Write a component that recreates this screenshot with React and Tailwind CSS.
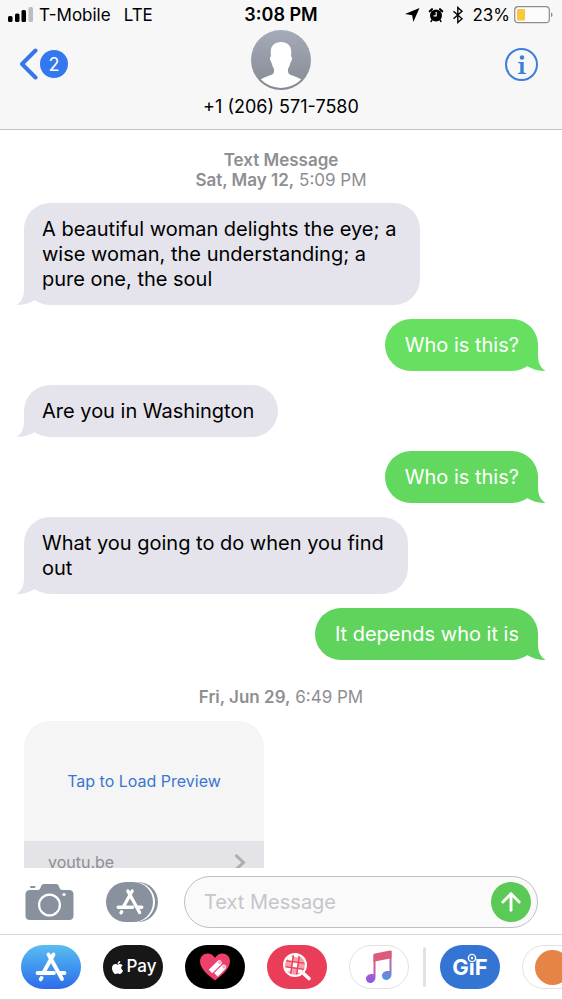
import React, { useState } from "react";
import { FaApple } from "react-icons/fa";
import { FiArrowUp } from "react-icons/fi";

const messages = [
	{
		id: 1,
		text: "A beautiful woman delights the eye; a\nwise woman, the understanding; a\npure one, the soul",
	},
	{ id: 2, mine: true, color: "bg-[#67e062] text-[#67e062]", text: "Who is this?" },
	{ id: 3, text: "Are you in Washington" },
	{ id: 4, mine: true, color: "bg-[#62d95e] text-[#62d95e]", text: "Who is this?" },
	{ id: 5, text: "What you going to do when you find\nout" },
	{ id: 6, mine: true, color: "bg-[#60d35d] text-[#60d35d]", text: "It depends who it is" },
];

// Status bar icons
const SignalIcon = () => (
	<svg width="26" height="16" viewBox="0 0 26 16" aria-hidden="true">
		<rect x="0" y="9" width="4.500" height="6" rx="1.500" />
		<rect x="7" y="6.500" width="4.500" height="8.500" rx="1.500" />
		<rect x="13.500" y="3" width="4.500" height="12" rx="1.500" />
		<rect x="20.500" y="0" width="4.500" height="15" rx="1.500" fill="#bdbdbd" />
	</svg>
);

const LocationIcon = () => (
	<svg width="16" height="16" viewBox="0 0 16 16" aria-hidden="true">
		<path d="M15.500 1 9.300 15 8.200 8.300 1 7z" />
	</svg>
);

const AlarmIcon = () => (
	<svg width="16" height="16" viewBox="0 0 16 16" aria-hidden="true">
		<circle cx="8" cy="8.500" r="6" />
		<path d="M1.800 4.300 4 2.200M14.200 4.300 12 2.200" stroke="#000" strokeWidth="2.200" strokeLinecap="round" />
		<path d="m4 13-1 1.500M12 13l1 1.500" stroke="#000" strokeWidth="1.400" strokeLinecap="round" />
		<path d="M8.200 5v3.800H5.500" fill="none" stroke="#f7f7f7" strokeWidth="1.200" />
	</svg>
);

const BluetoothIcon = () => (
	<svg width="12" height="18" viewBox="0 0 12 18" fill="none" stroke="#000" strokeWidth="1.400" aria-hidden="true">
		<path d="M1.500 5.200 10 12.800l-4.200 3.700V1.500L10 5.200 1.500 12.800" />
	</svg>
);

const BatteryIcon = () => (
	<svg width="40" height="18" viewBox="0 0 40 18" aria-hidden="true">
		<rect x="0.700" y="0.700" width="34.600" height="16" rx="3.500" fill="#fcfcfc" stroke="#8e8e8e" strokeWidth="1.200" />
		<rect x="3" y="3" width="8" height="11.500" rx="1" fill="#f8c93c" />
		<path d="M37 6.500c2 .5 2 4 0 4.500z" fill="#8e8e8e" />
	</svg>
);

const Avatar = () => (
	<svg width="60" height="60" viewBox="0 0 60 60" aria-hidden="true">
		<defs>
			<linearGradient id="avatar" x1="0" y1="0" x2="0" y2="1">
				<stop offset="0" stopColor="#a5abb9" />
				<stop offset="1" stopColor="#858992" />
			</linearGradient>
			<clipPath id="avatarClip">
				<circle cx="30" cy="30" r="28" />
			</clipPath>
		</defs>
		<circle cx="30" cy="30" r="30" fill="url(#avatar)" />
		<path
			clipPath="url(#avatarClip)"
			fill="#fff"
			d="M30 12c6.500 0 10.500 4 10.300 10.500l-.3 4c1.600.2 1.300 3.500-.3 5.700-.7 1-.8 3.800-2.300 5.800-.7 1-.6 4 .3 5.400 2 2.600 13 3.800 15.300 9V60H7v-7.600c2.300-5.200 13.300-6.400 15.300-9 .9-1.400 1-4.400.3-5.400-1.500-2-1.600-4.800-2.300-5.800-1.600-2.200-1.900-5.500-.3-5.700l-.3-4C19.500 16 23.500 12 30 12z"
		/>
	</svg>
);

// The "A" made of three sticks
const StoreMark = ({ size }) => (
	<svg width={size} height={size} viewBox="0 0 32 32" fill="none" stroke="#fff" strokeWidth="3.800" strokeLinecap="round" aria-hidden="true">
		<path d="M13.500 3.500 27 28" />
		<path d="M18.500 3.500 8.500 21.500" />
		<path d="M2.500 22H19M25 22h4.500" />
		<path d="m6.500 27-.8 1.400" />
	</svg>
);

const CameraIcon = () => (
	<svg width="50" height="38" viewBox="0 0 50 38" aria-hidden="true">
		<path
			fill="#8a919e"
			d="M5 7h8c1.500 0 2-1 2.600-2.500C16.300 2.300 17 1 19 1h12c2 0 2.700 1.300 3.400 3.500C35 6 35.500 7 37 7h7c3 0 4.500 1.500 4.500 4.500v21c0 3-1.500 4.500-4.500 4.500H5c-3 0-4.500-1.500-4.500-4.500v-21C.5 8.500 2 7 5 7z"
		/>
		<rect x="5" y="3" width="5.500" height="2" rx="1" fill="#8a919e" />
		<circle cx="24.500" cy="22" r="10.400" fill="none" stroke="#fff" strokeWidth="2.200" />
		<circle cx="39" cy="11.500" r="1.600" fill="#fff" />
	</svg>
);

const HeartIcon = () => (
	<svg width="32" height="30" viewBox="0 0 32 30" aria-hidden="true">
		<path fill="#ee3f6d" d="M16 28.500C12 25 1 18 1 9.500 1 4.500 4.500 1.500 8.500 1.500c3.500 0 6 2 7.500 4.500 1.500-2.500 4-4.500 7.500-4.500 4 0 7.500 3 7.500 8C31 18 20 25 16 28.500z" />
		<g transform="rotate(45 20 16)">
			<path fill="#fff" d="M15 11a2.500 2.500 0 0 1 5 0v12.500h-5zM21.200 11a2.500 2.500 0 0 1 5 0v11h-5z" transform="translate(-1 1)" />
			<path fill="#f9a9bf" d="M15 11.500a1.500 1.500 0 0 1 3 0v1.500h-3zM21.200 11.500a1.500 1.500 0 0 1 3 0v1.500h-3z" />
		</g>
	</svg>
);

const ImageSearchIcon = () => (
	<svg width="30" height="30" viewBox="0 0 30 30" fill="none" aria-hidden="true">
		<circle cx="13" cy="13" r="10.500" fill="#f7a0ae" />
		<g transform="rotate(8 13 13)">
			<path fill="#fff" d="M10.500 10.500h5v5h-5zM5 5h4.500v4.500H5zM16.500 16.500H21V20h-4.500zM10.500 3h5v2h-5zM4 16.500h5.500V20H5z" />
			<path d="M10 3v20M16 3v20M3 10h20M3 16h20" stroke="#ea3d57" strokeWidth="1.400" />
		</g>
		<circle cx="13" cy="13" r="11" stroke="#fff" strokeWidth="2" />
		<path d="m21.500 21.500 5.500 5" stroke="#fff" strokeWidth="3.600" strokeLinecap="round" />
	</svg>
);

const MusicIcon = () => (
	<svg width="28" height="34" viewBox="0 0 28 34" aria-hidden="true">
		<defs>
			<linearGradient id="noteLeft" x1="0" y1="0" x2="0" y2="1">
				<stop offset="0.150" stopColor="#ea5673" />
				<stop offset="0.650" stopColor="#b45fc0" />
				<stop offset="1" stopColor="#7d5af0" />
			</linearGradient>
			<linearGradient id="noteRight" x1="0" y1="0" x2="0" y2="1">
				<stop offset="0.150" stopColor="#d4608c" />
				<stop offset="0.650" stopColor="#8a78c8" />
				<stop offset="1" stopColor="#4a98e8" />
			</linearGradient>
		</defs>
		<path fill="url(#noteLeft)" d="M8.500 4.500v19.700C3.500 23.500 1 26 1 28.800 1 31 2.700 33 5 33c3.200 0 5.500-2.500 5.500-6V4z" />
		<path fill="url(#noteRight)" d="M24.500 1v20.200c-5-.7-7.500 1.800-7.500 4.600 0 2.200 1.700 4.200 4 4.200 3.200 0 5.500-2.500 5.500-6V1z" />
		<path fill="#dd5a7d" d="M8.500 5.500c0-1.300.5-1.800 1.500-2L25 .6c1-.2 1.500.2 1.500 1.200v6.500l-18 3.500z" />
	</svg>
);

const Tail = ({ mine }) => (
	<svg
		className={mine ? "absolute bottom-0 -right-2 -scale-x-100" : "absolute bottom-0 -left-2"}
		width="26"
		height="30"
		viewBox="0 0 26 30"
		fill="currentColor"
		aria-hidden="true"
	>
		<path d="M8 2V14C8 21 6 26.500 0.500 30 8 30 14 28 19 25L26 2z" />
	</svg>
);

const Bubble = ({ message }) => (
	<li
		className={
			message.mine
				? `relative self-end rounded-[26px] pt-[14px] pr-[19px] pb-[13px] pl-5 ${message.color}`
				: "relative self-start rounded-[26px] bg-[#e5e4ec] pt-[14px] pr-6 pb-[13px] pl-[18px] text-[#e5e4ec]"
		}
	>
		<Tail mine={message.mine} />
		<p className={message.mine ? "relative text-white" : "relative whitespace-pre-line text-black"}>
			{message.text}
		</p>
	</li>
);

const AppButton = ({ label, className, children }) => (
	<button
		type="button"
		aria-label={label}
		className={`flex h-11 w-[60px] shrink-0 items-center justify-center rounded-full ${className}`}
	>
		{children}
	</button>
);

const Header = () => (
	<header className="shrink-0 border-b border-[#c4c4c6] bg-[#f7f7f7] pb-3">
		<div className="grid h-[30px] grid-cols-[1fr_auto_1fr] items-center px-2 text-[17px] leading-5">
			<div className="flex items-center gap-[5px]">
				<SignalIcon />
				<span>T-Mobile</span>
				<span className="ml-2">LTE</span>
			</div>
			<span className="text-[18px] font-semibold">3:08 PM</span>
			<div className="flex items-center justify-end gap-2">
				<LocationIcon />
				<AlarmIcon />
				<BluetoothIcon />
				<span className="flex items-center gap-1">
					23%
					<BatteryIcon />
				</span>
			</div>
		</div>
		<div className="grid grid-cols-[1fr_auto_1fr] items-start px-[19px]">
			<button type="button" aria-label="Back, 2 unread" className="mt-[18px] flex items-center gap-[2px] justify-self-start">
				<svg width="19" height="32" viewBox="0 0 19 32" fill="none" stroke="#3577e5" strokeWidth="4" strokeLinecap="round" strokeLinejoin="round" aria-hidden="true">
					<path d="M16.500 2.500 3 16l13.500 13.500" />
				</svg>
				<span className="flex size-7 items-center justify-center rounded-full bg-[#3478f0] text-[18px] text-white">
					2
				</span>
			</button>
			<div className="flex flex-col items-center gap-[6px]">
				<Avatar />
				<h1 className="text-[18px] leading-[21px]">+1 (206) 571-7580</h1>
			</div>
			<button
				type="button"
				aria-label="Details"
				className="mt-[18px] mr-[5px] flex size-[33px] items-center justify-center justify-self-end rounded-full border-2 border-[#3c7ddd] text-[#3c7ddd]"
			>
				<svg width="10" height="20" viewBox="0 0 10 20" fill="currentColor" aria-hidden="true">
					<circle cx="5" cy="2.500" r="2.200" />
					<path d="M1 7h5.700v10.500l2.300.6V19H1v-.9l2.300-.6V8.500L1 8z" />
				</svg>
			</button>
		</div>
	</header>
);

const App = () => {
	const [draft, setDraft] = useState("");

	return (
		<div className="flex h-screen flex-col overflow-hidden bg-white font-['Inter',sans-serif] text-black">
			<Header />

			<main className="min-h-0 flex-1 overflow-hidden px-6 pt-5">
				<p className="text-center text-[17px] leading-5 text-[#8e8e93]">
					<span className="block font-semibold">Text Message</span>
					<span className="font-semibold">Sat, May 12,</span> 5:09 PM
				</p>
				<ul className="mt-[13px] flex flex-col gap-[14px] text-[20px] leading-[25px]">
					{messages.map((message) => (
						<Bubble key={message.id} message={message} />
					))}
				</ul>
				<p className="mt-[27px] text-center text-[17px] leading-5 text-[#8e8e93]">
					<span className="font-semibold">Fri, Jun 29,</span> 6:49 PM
				</p>
				<div className="mt-[14px] w-60 overflow-hidden rounded-[26px] bg-[#f5f5f6]">
					<button type="button" className="h-[120px] w-full text-[16px] text-[#3b76cf]">
						Tap to Load Preview
					</button>
					<a href="#preview" className="flex h-[62px] items-start justify-between bg-[#e4e3e8] pt-[11px] pl-6 pr-[18px] text-[16px] leading-5 text-[#8e8e93]">
						youtu.be
						<svg className="mt-[2px]" width="12" height="17" viewBox="0 0 12 17" fill="none" stroke="#adadb1" strokeWidth="3" aria-hidden="true">
							<path d="m1.500 1 8 7.500-8 7.500" />
						</svg>
					</a>
				</div>
			</main>

			<form
				className="flex shrink-0 items-center bg-white pt-2 pb-[6px] pl-[25px] pr-6"
				onSubmit={(e) => e.preventDefault()}
			>
				<button type="button" aria-label="Camera">
					<CameraIcon />
				</button>
				<button type="button" aria-label="Apps" className="relative ml-[31px] flex h-10 w-[52px]">
					<span className="absolute right-0 h-10 w-[47px] rounded-full bg-[#8a919e]" />
					<span className="absolute left-0 h-10 w-[49px] rounded-full bg-white" />
					<span className="relative flex h-10 w-[47px] items-center justify-center rounded-full bg-[#8a919e]">
						<StoreMark size={28} />
					</span>
				</button>
				<div className="ml-[26px] flex h-[52px] min-w-0 flex-1 items-center rounded-full border border-[#c0c0c4] bg-[#fafafa] pl-[19px] pr-[6px]">
					<input
						type="text"
						aria-label="Text Message"
						placeholder="Text Message"
						value={draft}
						onChange={(e) => setDraft(e.target.value)}
						className="min-w-0 flex-1 bg-transparent text-[20px] outline-none placeholder:text-[#c5c5ca]"
					/>
					<button
						type="submit"
						aria-label="Send"
						className="flex size-10 shrink-0 items-center justify-center rounded-full bg-[#5ac955] text-white"
					>
						<FiArrowUp size={28} strokeWidth={2.5} />
					</button>
				</div>
			</form>

			<nav className="flex shrink-0 items-center gap-[22px] overflow-hidden border-y border-[#d9d9dc] bg-white py-[10px] pl-[21px]">
				<AppButton label="App Store" className="bg-linear-to-b from-[#5abdf0] to-[#2f6bea]">
					<StoreMark size={32} />
				</AppButton>
				<AppButton label="Apple Pay" className="gap-[2px] bg-[#171717] text-[17px] font-medium text-white">
					<FaApple size={15} />
					Pay
				</AppButton>
				<AppButton label="Digital Touch" className="bg-black">
					<HeartIcon />
				</AppButton>
				<AppButton label="Images" className="bg-[#ea3d57]">
					<ImageSearchIcon />
				</AppButton>
				<AppButton label="Music" className="border border-[#e2e2e4] bg-white">
					<MusicIcon />
				</AppButton>
				<span className="-mx-2 h-10 w-[3px] shrink-0 rounded-full bg-[#e2e2e4]" />
				<AppButton label="GIF" className="bg-[#3474d2] text-[22px] font-bold text-white">
					<span className="relative">
						GıF
						<svg className="absolute top-[2px] left-[15px]" width="10" height="10" viewBox="0 0 10 10" aria-hidden="true">
							<circle cx="5" cy="5" r="3.600" fill="#3474d2" stroke="#fff" strokeWidth="1.400" />
							<circle cx="5" cy="5" r="1.200" fill="#fff" />
						</svg>
					</span>
				</AppButton>
				<AppButton label="More" className="border border-[#e2e2e4] bg-white">
					<span className="size-[35px] rounded-full bg-[#e58444]" />
				</AppButton>
			</nav>
		</div>
	);
};

export default App;
